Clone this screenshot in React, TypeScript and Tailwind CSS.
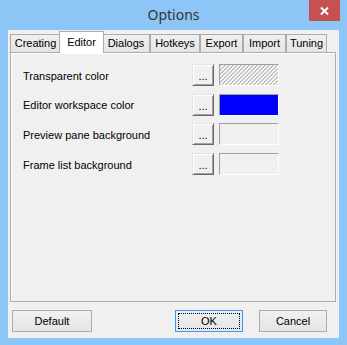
const tabs = [
  { label: "Creating", w: "w-[51px]" },
  { label: "Editor", w: "w-[45px]", active: true },
  { label: "Dialogs", w: "w-[48px]" },
  { label: "Hotkeys", w: "w-[50px]" },
  { label: "Export", w: "w-[43px]" },
  { label: "Import", w: "w-[43px]" },
  { label: "Tuning", w: "w-[41px]" },
];

const rows = [
  { label: "Transparent color", swatch: "hatch" },
  { label: "Editor workspace color", swatch: "blue" },
  { label: "Preview pane background", swatch: "none" },
  { label: "Frame list background", swatch: "none" },
];

function Swatch({ kind }: { kind: string }) {
  const fill =
    kind === "blue"
      ? "bg-[#0000ff]"
      : kind === "hatch"
        ? "bg-[repeating-linear-gradient(135deg,#c4c4c4_0px,#c4c4c4_1.6px,#f8f8f8_1.6px,#f8f8f8_2.83px)]"
        : "bg-[#f0f0f0]";
  return (
    <div
      className={`w-[60px] h-[22px] border border-t-[#a0a0a0] border-l-[#a0a0a0] border-b-white border-r-white ${fill}`}
    />
  );
}

function DotsButton() {
  return (
    <button className="w-[22px] h-[22px] bg-[#f0f0f0] border border-t-[#e3e3e3] border-l-[#e3e3e3] border-b-[#696969] border-r-[#696969] shadow-[inset_1px_1px_0_#fff,inset_-1px_-1px_0_#a0a0a0] flex items-end justify-center pb-[3px] text-[11px] leading-none text-black">
      ...
    </button>
  );
}

function DialogButton({ label, w, focused }: { label: string; w: string; focused?: boolean }) {
  return (
    <button
      className={`relative ${w} h-[22px] border ${
        focused ? "border-[#3399ff]" : "border-[#acacac]"
      } bg-[linear-gradient(#f0f0f0,#e5e5e5)] text-[11px] text-black flex items-center justify-center`}
    >
      {focused && <span className="absolute inset-[2px] border border-dotted border-black" />}
      {label}
    </button>
  );
}

export default function App() {
  return (
    <div
      className="w-[347px] h-[345px] bg-[#8dc5f6] flex flex-col"
      style={{ fontFamily: '"Liberation Sans", Arial, sans-serif' }}
    >
      <div className="relative h-[30px] flex items-center justify-center">
        <span
          className="text-[14px] text-[#333] pb-[1px]"
          style={{ fontFamily: '"Noto Sans", sans-serif' }}
        >
          Options
        </span>
        <div className="absolute top-0 right-[7px] w-[31px] h-[21px] bg-[#c75050] flex items-center justify-center">
          <svg width="9" height="8" viewBox="0 0 9 8">
            <path d="M1 0.5 L8 7.5 M8 0.5 L1 7.5" stroke="#fff" strokeWidth="2" />
          </svg>
        </div>
      </div>

      <div className="mx-[8px] h-[308px] bg-[#f0f0f0] flex flex-col">
        <div className="h-[22px] pl-[2px] flex items-end">
          {tabs.map((t) =>
            t.active ? (
              <div
                key={t.label}
                className={`relative z-10 ${t.w} -mx-[2px] h-[22px] -mb-[1px] bg-white border border-b-0 border-[#acacac] flex justify-center pt-[2px] text-[11px] text-black`}
              >
                {t.label}
              </div>
            ) : (
              <div
                key={t.label}
                className={`${t.w} h-[18px] bg-[linear-gradient(#f0f0f0,#e5e5e5)] border border-b-0 border-[#acacac] flex items-center justify-center text-[11px] text-black`}
              >
                {t.label}
              </div>
            )
          )}
        </div>

        <div className="ml-[2px] w-[326px] h-[250px] border border-[#acacac] bg-[#f0f0f0] shadow-[inset_1px_1px_0_#fff] pt-[11px] pl-[12px] flex flex-col gap-[7.67px]">
          {rows.map((r) => (
            <div key={r.label} className="flex items-center h-[22px]">
              <span className="w-[169px] text-[11px] text-black pt-[2px]">{r.label}</span>
              <DotsButton />
              <div className="ml-[5px]">
                <Swatch kind={r.swatch} />
              </div>
            </div>
          ))}
        </div>

        <div className="mt-[8px] flex">
          <div className="ml-[4px]">
            <DialogButton label="Default" w="w-[80px]" />
          </div>
          <div className="ml-[83px]">
            <DialogButton label="OK" w="w-[68px]" focused />
          </div>
          <div className="ml-[16px]">
            <DialogButton label="Cancel" w="w-[68px]" />
          </div>
        </div>
      </div>
    </div>
  );
}
